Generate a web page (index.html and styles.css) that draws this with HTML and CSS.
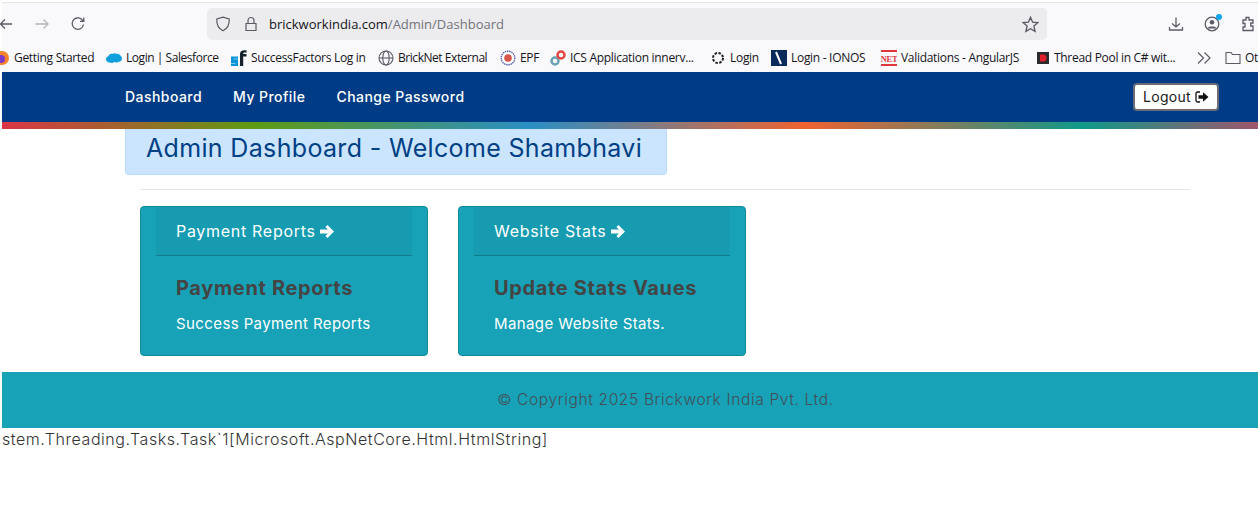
FILE: index.html
```html
<!DOCTYPE html>
<html lang="en">
<head>
<meta charset="utf-8">
<title>Admin Dashboard</title>
<link rel="stylesheet" href="styles.css">
</head>
<body>
<div class="page">
  <header class="browser">
    <div class="toolbar">
      <div class="nav-icons">
        <svg class="tb-ic back" viewBox="0 0 16 16"><path d="M14 8H2.500M7 3.500 2.500 8 7 12.500"/></svg>
        <svg class="tb-ic fwd" viewBox="0 0 16 16"><path d="M1.500 8H14M9.500 3.500 14 8l-4.500 4.500"/></svg>
        <svg class="tb-ic reload" viewBox="0 0 16 16"><path d="M13.500 8.500A5.700 5.700 0 1 1 11.500 3.200L13.500 5M13.800 1.500V5.300H10"/></svg>
      </div>
      <div class="urlbar">
        <svg class="url-ic" viewBox="0 0 16 16"><path d="M8 1.200 14.200 3c.3 5.500-1.500 9.500-6.200 11.800C3.300 12.500 1.500 8.500 1.800 3Z"/></svg>
        <svg class="url-ic lock" viewBox="0 0 16 16"><path d="M3 7.500h10v7H3zM5 7.500V4.500a3 3 0 0 1 6 0v3"/></svg>
        <span class="url"><span class="host">brickworkindia.com</span>/Admin/Dashboard</span>
        <svg class="url-ic star" viewBox="0 0 16 16"><path d="m8 1.300 2 4.500 4.900.5-3.700 3.200 1.100 4.900L8 12l-4.300 2.400 1.100-4.900L1.100 6.300 6 5.800Z"/></svg>
      </div>
      <div class="tools">
        <svg class="tb-ic" viewBox="0 0 16 16"><path d="M8 1.500v9.500M4 7.500 8 11l4-3.500M1.500 11v3h13v-3"/></svg>
        <span class="account">
          <svg class="tb-ic" viewBox="0 0 16 16"><circle cx="8" cy="8" r="6.800"/><circle class="solid" cx="8" cy="6.300" r="2.300"/><path class="solid" d="M3.800 11.500c1-1.500 7.400-1.500 8.400 0v1H3.800z"/></svg>
          <i class="dot"></i>
        </span>
        <svg class="tb-ic" viewBox="0 0 16 16"><path d="M6 1.500h3v2.500h4v3h-2.200v3H13v4.500H3v-3.500h2V7.500H3V4h3z"/></svg>
      </div>
    </div>
    <nav class="bookmarks">
      <a class="bm"><svg class="bi" viewBox="0 0 16 16"><circle cx="8" cy="8" r="7" fill="#f5832a"/><circle cx="7" cy="9" r="4" fill="#7d3bc9"/></svg>Getting Started</a>
      <a class="bm tight"><svg class="bi" viewBox="0 0 16 16"><path d="M3.500 12.500C1.500 12.500 0 11 0 9.300 0 7.800 1 6.700 2.300 6.300 3 4.500 4.700 3.500 6.500 4c1-.9 2.700-1.100 3.800-.2 1.700-.4 3.500.4 4.300 1.900C15.600 6.500 16 7.500 16 8.600c0 2-1.700 3.400-3.600 3.100-1 1-2.700 1.200-3.900.4-1.400 1-3.600 1.100-5 .4Z" fill="#0fa0dc"/></svg>Login | Salesforce</a>
      <a class="bm"><svg class="bi" viewBox="0 0 16 16"><path d="M0 6.500h7v2.200H2.500v.6H7V16H0v-2.200h4.500v-.6H0z" fill="#0b93d5"/><path d="M9 16V4c0-3 2-4.200 6.500-3.700v2.400c-2.300-.3-3.300 0-3.300 1.300h3.300v2.500h-3.300V16z" fill="#15222b"/></svg>SuccessFactors Log in</a>
      <a class="bm tight"><svg class="bi line" viewBox="0 0 16 16"><circle cx="8" cy="8" r="7"/><ellipse cx="8" cy="8" rx="3.200" ry="7"/><path d="M1 8h14"/></svg>BrickNet External</a>
      <a class="bm"><svg class="bi" viewBox="0 0 16 16"><circle cx="8" cy="8" r="6.800" fill="#fff" stroke="#5a5fa8" stroke-width="1.400" stroke-dasharray="1.500 .7"/><circle cx="8" cy="8" r="3.800" fill="#d9544b"/></svg>EPF</a>
      <a class="bm"><svg class="bi" viewBox="0 0 16 16"><circle cx="5" cy="11" r="3.500" fill="none" stroke="#6ba3b3" stroke-width="2.500"/><circle cx="11" cy="5" r="3.500" fill="none" stroke="#e0483f" stroke-width="2.500"/></svg>ICS Application innerv...</a>
      <a class="bm"><svg class="bi" viewBox="0 0 16 16"><circle cx="8" cy="8" r="5" fill="none" stroke="#222" stroke-width="2" stroke-dasharray="2.500 1.400"/></svg>Login</a>
      <a class="bm"><svg class="bi" viewBox="0 0 16 16"><path d="M0 0h16v16H0z" fill="#0b2a5c"/><path d="m5 2 5 12" stroke="#fff" stroke-width="2"/></svg>Login - IONOS</a>
      <a class="bm"><svg class="bi" viewBox="0 0 16 16"><path d="M0 0h16v2H0zM0 14h16v2H0z" fill="#e0383a"/><text class="net" x="8" y="11.500" text-anchor="middle">NET</text></svg>Validations - AngularJS</a>
      <a class="bm"><svg class="bi small" viewBox="0 0 14 14"><path d="M1 1h12v12H1z" fill="#2b2b2b"/><path d="M4 3.500h3a3.500 3.500 0 0 1 0 7H4z" fill="#e0202a"/></svg>Thread Pool in C# wit...</a>
      <svg class="chev" viewBox="0 0 14 14"><path d="m1 1.500 5.500 5.500L1 12.500M7.500 1.500 13 7l-5.500 5.500"/></svg>
      <a class="bm"><svg class="bi line" viewBox="0 0 16 16"><path d="M1 13.500V2.500h5l1.500 2H15v9z"/></svg>Ot</a>
    </nav>
  </header>

  <div class="site">
    <div class="topbar">
      <ul class="menu">
        <li><a>Dashboard</a></li>
        <li><a>My Profile</a></li>
        <li><a>Change Password</a></li>
      </ul>
      <button class="logout">Logout <svg class="logout-ic" viewBox="0 0 14 12"><path class="frame" d="M5 1H2.500A1.500 1.500 0 0 0 1 2.500v7A1.500 1.500 0 0 0 2.500 11H5"/><path d="M3.500 4.200h4.500V1.300L13.500 6 8 10.700V7.800H3.500z"/></svg></button>
    </div>
    <div class="rainbow"></div>
    <main class="content">
      <h1 class="welcome">Admin Dashboard - Welcome Shambhavi</h1>
      <hr class="rule">
      <section class="cards">
        <article class="card">
          <div class="card-head">Payment Reports <svg class="arrow" viewBox="0 0 14 13"><path d="M7.500 0 14 6.500 7.500 13 5.400 10.900 7.900 8.500H0V4.500H7.900L5.400 2.100Z"/></svg></div>
          <div class="card-body">
            <h2>Payment Reports</h2>
            <p>Success Payment Reports</p>
          </div>
        </article>
        <article class="card">
          <div class="card-head">Website Stats <svg class="arrow" viewBox="0 0 14 13"><path d="M7.500 0 14 6.500 7.500 13 5.400 10.900 7.900 8.500H0V4.500H7.900L5.400 2.100Z"/></svg></div>
          <div class="card-body">
            <h2>Update Stats Vaues</h2>
            <p>Manage Website Stats.</p>
          </div>
        </article>
      </section>
    </main>
    <footer class="site-footer">© Copyright 2025 Brickwork India Pvt. Ltd.</footer>
    <div class="leak">stem.Threading.Tasks.Task`1[Microsoft.AspNetCore.Html.HtmlString]</div>
  </div>
</div>
</body>
</html>
```

FILE: styles.css
```css
* { box-sizing: border-box; }
html, body { margin: 0; height: 100%; overflow: hidden; background: #fff; }
body { font-family: Inter, "Open Sans", sans-serif; color: #444; }
.page { padding: 0 2px; height: 519px; overflow: hidden; }

.browser { height: 70px; margin-top: 2px; background: #f9f9fb; border-top: 1px solid #e6e6e8; font-family: "Open Sans", "Noto Sans", sans-serif; }
.toolbar { height: 40px; display: flex; align-items: center; padding-top: 2px; }
.nav-icons { display: flex; align-items: center; gap: 20px; width: 209px; margin-left: -4px; flex: none; }
.tb-ic { width: 16px; height: 16px; fill: none; stroke: #5b5b66; stroke-width: 1.300; flex: none; }
.tb-ic .solid { fill: #5b5b66; stroke: none; }
.fwd { stroke: #b5b5bb; }
.urlbar { width: 840px; height: 32px; background: #ececee; border-radius: 5px; display: flex; align-items: center; padding: 0 8px; gap: 12px; flex: none; }
.url-ic { width: 16px; height: 16px; fill: none; stroke: #5b5b66; stroke-width: 1.200; flex: none; }
.url { font-size: 13px; color: #73737d; flex: 1; margin-left: -2px; white-space: nowrap; }
.host { color: #15141a; }
.star { stroke-width: 1.300; width: 17px; height: 17px; }
.tools { display: flex; align-items: center; gap: 20px; margin-left: 121px; }
.account { position: relative; display: flex; }
.dot { position: absolute; right: -2px; top: -2px; width: 6px; height: 6px; border-radius: 50%; background: #0fa5f0; }

.bookmarks { height: 29px; display: grid; grid-template-columns: 112px 125px 147px 122px 50px 160px 61px 110px 155px 161px 28px 1fr; align-items: center; margin-left: -8px; font-size: 12px; color: #15141a; white-space: nowrap; overflow: hidden; }
.bm { display: flex; align-items: center; gap: 4px; letter-spacing: -.3px; }
.bm.tight { letter-spacing: -.45px; }
.bi { width: 16px; height: 16px; flex: none; }
.bi.small { width: 14px; height: 14px; }
.bi.line { fill: none; stroke: #5b5b66; stroke-width: 1.100; }
.net { font: 700 8.500px "Liberation Serif", serif; fill: #e0383a; letter-spacing: -.3px; }
.chev { width: 14px; height: 14px; fill: none; stroke: #5b5b66; stroke-width: 1.200; }

.site { display: flex; flex-direction: column; }
.topbar { height: 50px; background: #003c85; display: flex; align-items: center; justify-content: space-between; padding: 0 39px 0 123px; }
.menu { list-style: none; display: flex; gap: 31px; margin: 0 0 2px; padding: 0; }
.menu a { color: #fff; font-size: 14px; font-weight: 500; letter-spacing: .45px; }
.logout { height: 28px; width: 86px; padding: 0 0 1px; background: #fff; border: 2px solid #6c6c78; border-radius: 4px; color: #1a1a1a; font: 400 14px Inter, sans-serif; letter-spacing: .3px; display: flex; align-items: center; justify-content: center; gap: 4px; }
.logout-ic { width: 14px; height: 12px; fill: #111; }
.logout-ic .frame { fill: none; stroke: #111; stroke-width: 1.300; }
.rainbow { height: 7px; background: linear-gradient(90deg, #dc3545 0, #5f9a12 20%, #2a8fc5 42%, #f0622f 64%, #0f9a8a 86%, #a0566c 100%); }

.content { padding: 0 68px 0 138px; }
.welcome { margin: 0 0 0 -15px; width: 542px; height: 46px; padding: 0 20px; background: #cce5ff; border: 1px solid #b8daff; border-top: 0; border-radius: 0 0 4px 4px; color: #004085; font-size: 25px; font-weight: 400; line-height: 38px; letter-spacing: .34px; white-space: nowrap; }
.rule { margin: 14px 0 16px; border: 0; border-top: 1px solid #e5e5e5; }
.cards { display: flex; gap: 30px; }
.card { width: 288px; height: 150px; background: #17a2b8; border: 1px solid #128a9c; border-radius: 4px; padding: 0 15px; color: #fff; }
.card-head { height: 49px; background: rgba(0,0,0,.04); border-bottom: 1px solid rgba(0,0,0,.2); padding-left: 20px; font-size: 16px; letter-spacing: .7px; line-height: 48px; display: flex; align-items: center; gap: 0; }
.arrow { width: 14px; height: 13px; fill: #fff; margin-left: 4px; }
.card-body { padding: 20px 20px 0; }
.card-body h2 { margin: 0; color: #444; font-size: 20px; font-weight: 700; line-height: 24px; letter-spacing: .65px; }
.card-body p { margin: 13px 0 0; font-size: 15px; line-height: 22px; letter-spacing: .4px; }
.site-footer { height: 56px; margin-top: 16px; padding-bottom: 2px; padding-left: 71px; background: #17a2b8; color: #444f55; font-size: 15.500px; font-weight: 300; letter-spacing: .65px; display: flex; align-items: center; justify-content: center; }
.leak { font-size: 16px; line-height: 22px; letter-spacing: .55px; font-weight: 300; color: #333; white-space: nowrap; }
```
